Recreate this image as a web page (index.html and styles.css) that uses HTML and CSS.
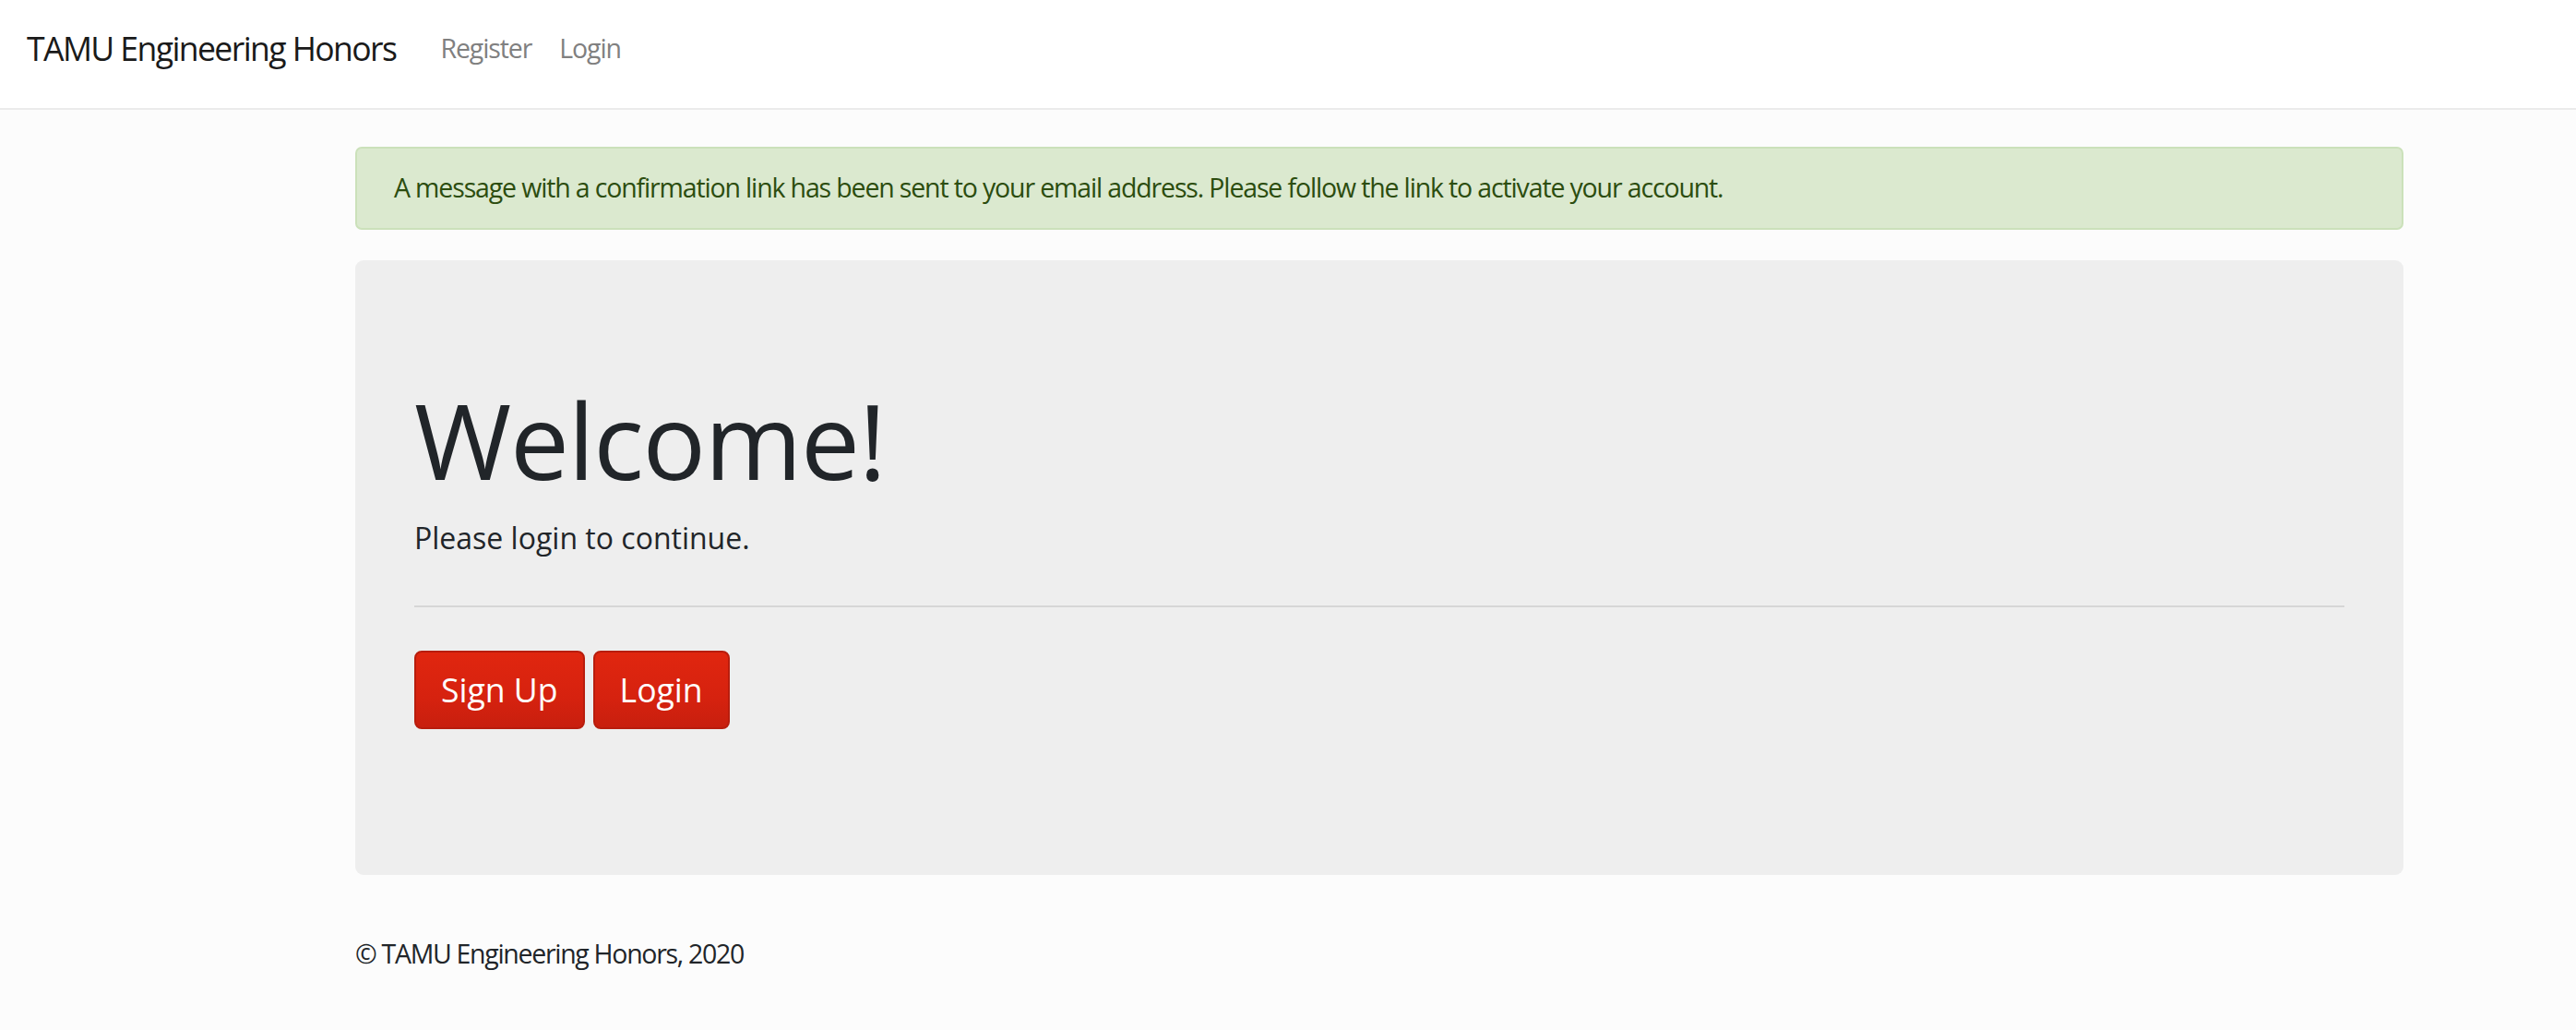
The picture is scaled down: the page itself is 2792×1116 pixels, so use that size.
FILE: index.html
```html
<!DOCTYPE html>
<html lang="en">
<head>
<meta charset="utf-8">
<title>TAMU Engineering Honors</title>
<link rel="stylesheet" href="styles.css">
</head>
<body>
<nav class="navbar">
  <a class="brand" href="#">TAMU Engineering Honors</a>
  <ul class="nav-links">
    <li><a href="#">Register</a></li>
    <li><a href="#">Login</a></li>
  </ul>
</nav>
<main class="content">
  <div class="alert">A message with a confirmation link has been sent to your email address. Please follow the link to activate your account.</div>
  <section class="jumbotron">
    <h1 class="title">Welcome!</h1>
    <p class="lead">Please login to continue.</p>
    <hr class="divider">
    <div class="actions">
      <a class="btn" href="#">Sign Up</a>
      <a class="btn" href="#">Login</a>
    </div>
  </section>
  <footer class="footer">© TAMU Engineering Honors, 2020</footer>
</main>
</body>
</html>
```

FILE: styles.css
```css
* { box-sizing: border-box; }
html, body { margin: 0; padding: 0; }
body {
  background: #fcfcfc;
  font-family: "Open Sans", "Liberation Sans", sans-serif;
  color: #212529;
  font-size: 28.5px;
  line-height: 1.5;
}
a { text-decoration: none; }

.navbar {
  display: flex;
  align-items: center;
  height: 119px;
  padding: 0 0 12px 29px;
  background: #ffffff;
  border-bottom: 2px solid #ebebeb;
}
.brand {
  font-size: 35.6px;
  letter-spacing: -1.6px;
  color: #1a1a1a;
  margin-right: 33px;
  line-height: 1.5;
}
.nav-links {
  display: flex;
  list-style: none;
  margin: 0;
  padding: 0;
}
.nav-links a {
  display: block;
  padding: 0 15px;
  color: #808080;
  font-size: 28.5px;
  letter-spacing: -1.1px;
}

.content {
  margin-left: 385px;
  width: 2220px;
  padding-top: 40px;
}

.alert {
  background: #dbe9cf;
  border: 2px solid #cbe1ba;
  border-radius: 7px;
  color: #2c4d0f;
  padding: 21px 40px;
  height: 90px;
  letter-spacing: -1.15px;
}

.jumbotron {
  margin-top: 33px;
  background: #eeeeee;
  border-radius: 9px;
  padding: 126px 64px 160px;
  height: 666px;
}
.title {
  margin: 0 0 14px;
  font-size: 114px;
  font-weight: 400;
  letter-spacing: -1.3px;
  line-height: 1.2;
  color: #212529;
}
.lead {
  margin: 0;
  font-size: 32px;
  line-height: 1.5;
}
.divider {
  margin: 49px 0 47px;
  border: 0;
  border-top: 2px solid #d6d6d6;
  height: 0;
}
.actions {
  display: flex;
  gap: 9px;
}
.btn {
  display: inline-block;
  font-size: 35.6px;
  line-height: 1.5;
  padding: 14px 27px;
  color: #ffffff;
  border: 2px solid #b81d0d;
  border-radius: 8px;
  background-image: linear-gradient(#e0260f, #d6220f 60%, #c81f0e);
}

.footer {
  margin-top: 64px;
  font-size: 28.5px;
  letter-spacing: -1.3px;
  color: #212529;
}
```
